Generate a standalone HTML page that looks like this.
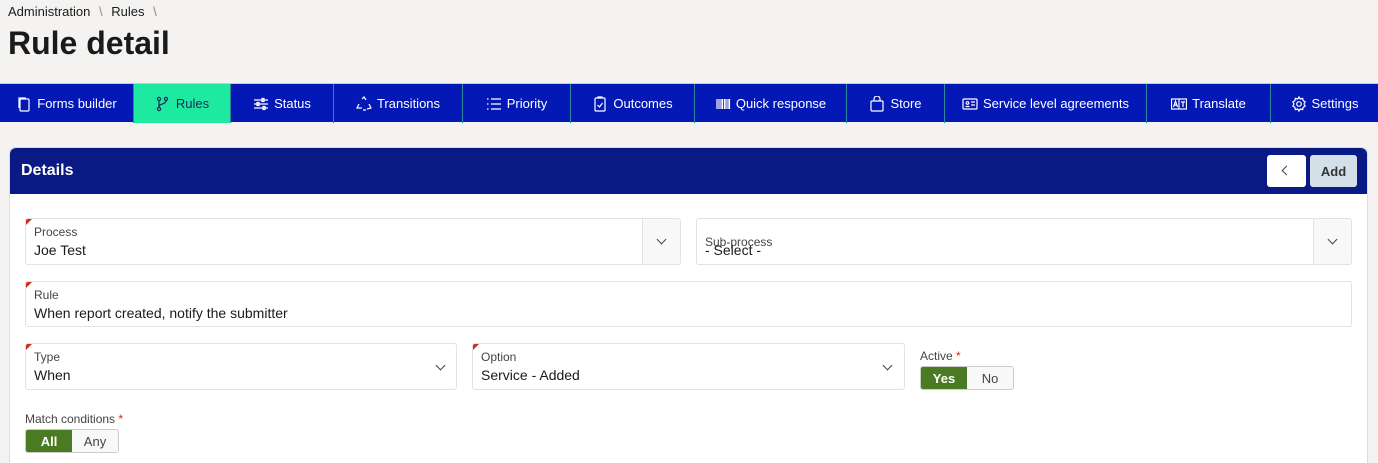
<!DOCTYPE html><html style="height:463px;overflow:hidden"><head><style>
*{box-sizing:border-box;margin:0;padding:0}
body{width:1378px;height:463px;overflow:hidden;background:#f4f3f2;font-family:"Liberation Sans",sans-serif;color:#1a1a1a;position:relative}
.a{position:absolute}
.nav{top:83px;left:0;width:1378px;height:39px;background:#0418b5;border-top:1px solid #ccc}
.tab{position:absolute;top:0;height:39px;color:#fff;font-size:13px;display:flex;align-items:center;justify-content:center;gap:5px;border-left:1px solid #2a8a9a}
.tab svg{width:16px;height:16px;stroke:#fff;fill:none;stroke-width:1.2}
.card{left:9px;top:147px;width:1359px;height:316px;background:#fff;border-radius:6px 6px 0 0;border:1px solid #ddd;border-bottom:none}
.hd{left:0;top:0;width:1357px;height:46px;background:#0a1a85;border-radius:6px 6px 0 0}
.f{position:absolute;background:#fff;border:1px solid #e2e2e2;border-radius:3px;overflow:hidden}
.f .l{position:absolute;left:8px;top:6px;font-size:12px;color:#444}
.f .v{position:absolute;left:8px;top:23px;font-size:14px;color:#1a1a1a}
.req:before{content:"";position:absolute;left:0;top:0;border-top:6px solid #d42a1a;border-right:6px solid transparent;z-index:2}
.chev{position:absolute;width:7px;height:7px;border-right:1.3px solid #444;border-bottom:1.3px solid #444;transform:rotate(45deg)}
.tg{position:absolute;height:24px;display:flex;border:1px solid #ccc;border-radius:3px;overflow:hidden;font-size:13px}
.tg div{width:46px;display:flex;align-items:center;justify-content:center;background:#f8f8f8;color:#444}
.tg .on{background:#4a7a22;color:#fff;font-weight:bold}
.btn{position:absolute;right:0;top:0;width:38px;height:100%;border-left:1px solid #e2e2e2;background:#f8f8f8}
</style></head><body>
<div class="a" style="left:8px;top:4px;font-size:13px">Administration <span style="color:#888;margin:0 5px">\</span> Rules <span style="color:#888;margin-left:5px">\</span></div>
<div class="a" style="left:8px;top:25px;font-size:32px;font-weight:bold">Rule detail</div>
<div class="a nav">
<div class="tab" style="left:0;width:133px;border-left:none"><svg viewBox="0 0 16 16"><rect x="4" y="3" width="9" height="12" rx="1"/><path d="M3 12V2h7"/></svg>Forms builder</div>
<div class="tab" style="left:133px;width:97px;background:#1de9a0;color:#1a2a5a"><svg viewBox="0 0 16 16" style="stroke:#1a2a5a"><circle cx="4" cy="3" r="1.6"/><circle cx="11" cy="3" r="1.6"/><circle cx="4" cy="13" r="1.6"/><path d="M4 4.6v6.8M11 4.6c0 4-7 3-7 6"/></svg>Rules</div>
<div class="tab" style="left:230px;width:103px"><svg viewBox="0 0 16 16"><path d="M1 4h14M1 8h14M1 12h14"/><rect x="9" y="2.5" width="2" height="3"/><rect x="4" y="6.5" width="2" height="3"/><rect x="10" y="10.5" width="2" height="3"/></svg>Status</div>
<div class="tab" style="left:333px;width:129px"><svg viewBox="0 0 16 16"><path d="M6 3l2-2 2 3M13 8l2 4-4 1M3 8l-2 4h5M10 14h-3"/></svg>Transitions</div>
<div class="tab" style="left:462px;width:108px"><svg viewBox="0 0 16 16"><path d="M5 3h10M5 8h10M5 13h10M1 3h1.5M1 8h1.5M1 13h1.5"/></svg>Priority</div>
<div class="tab" style="left:570px;width:124px"><svg viewBox="0 0 16 16"><rect x="3" y="2" width="10" height="13" rx="1"/><path d="M6 2V1h4v1M5.5 9l2 2 3-4"/></svg>Outcomes</div>
<div class="tab" style="left:694px;width:152px"><svg viewBox="0 0 16 16"><path d="M2 3v10M4 3v10M6 3v10M7.5 3v10M9.5 3v10M11 3v10M13 3v10M14.5 3v10"/></svg>Quick response</div>
<div class="tab" style="left:846px;width:98px"><svg viewBox="0 0 16 16"><rect x="2" y="5" width="12" height="10" rx="1"/><path d="M5 5V3a3 3 0 016 0v2"/></svg>Store</div>
<div class="tab" style="left:944px;width:202px"><svg viewBox="0 0 16 16"><rect x="1" y="3" width="14" height="10" rx="1"/><path d="M9 6h4M9 9h4M3.5 10.5h4"/><circle cx="5.5" cy="7" r="1.3"/></svg>Service level agreements</div>
<div class="tab" style="left:1146px;width:124px"><svg viewBox="0 0 16 16"><rect x="0.5" y="3" width="15" height="10"/><path d="M8 3v10M2.5 11l2-6 2 6M3.3 9h2.4M10 6h4M12 6v5"/></svg>Translate</div>
<div class="tab" style="left:1270px;width:108px"><svg viewBox="0 0 16 16"><circle cx="8" cy="8" r="2.3"/><path d="M8 1l1.3 2 2.3-.6.6 2.3 2 1.3-1.2 2 1.2 2-2 1.3-.6 2.3-2.3-.6L8 15l-1.3-2-2.3.6-.6-2.3-2-1.3 1.2-2-1.2-2 2-1.3.6-2.3 2.3.6z"/></svg>Settings</div>
</div>
<div class="a card">
<div class="a hd"><div class="a" style="left:11px;top:14px;color:#fff;font-size:16px;font-weight:bold">Details</div>
<div class="a" style="left:1257px;top:7px;width:39px;height:32px;background:#fff;border-radius:3px"><div class="chev" style="left:16px;top:12px;transform:rotate(135deg)"></div></div>
<div class="a" style="left:1300px;top:7px;width:47px;height:32px;background:#d4e0e8;border-radius:3px;font-size:13px;font-weight:bold;color:#333;display:flex;align-items:center;justify-content:center">Add</div>
</div>
</div>
<div class="f req" style="left:25px;top:218px;width:656px;height:47px"><div class="l">Process</div><div class="v">Joe Test</div>
<div class="btn"><div class="chev" style="left:15px;top:17px"></div></div></div>
<div class="f" style="left:696px;top:218px;width:656px;height:47px"><div class="l" style="top:16px">Sub-process</div><div class="v" style="top:23px;font-size:14px">- Select -</div>
<div class="btn"><div class="chev" style="left:15px;top:17px"></div></div></div>
<div class="f req" style="left:25px;top:281px;width:1327px;height:46px"><div class="l">Rule</div><div class="v">When report created, notify the submitter</div></div>
<div class="f req" style="left:25px;top:343px;width:432px;height:47px"><div class="l">Type</div><div class="v">When</div><div class="chev" style="left:411px;top:18px"></div></div>
<div class="f req" style="left:472px;top:343px;width:433px;height:47px"><div class="l">Option</div><div class="v">Service - Added</div><div class="chev" style="left:411px;top:18px"></div></div>
<div class="a" style="left:920px;top:349px;font-size:12px;color:#444">Active <span style="color:#d42a1a">*</span></div>
<div class="tg" style="left:920px;top:366px"><div class="on">Yes</div><div>No</div></div>
<div class="a" style="left:25px;top:412px;font-size:12px;color:#444">Match conditions <span style="color:#d42a1a">*</span></div>
<div class="tg" style="left:25px;top:429px"><div class="on">All</div><div>Any</div></div>
</body></html>
